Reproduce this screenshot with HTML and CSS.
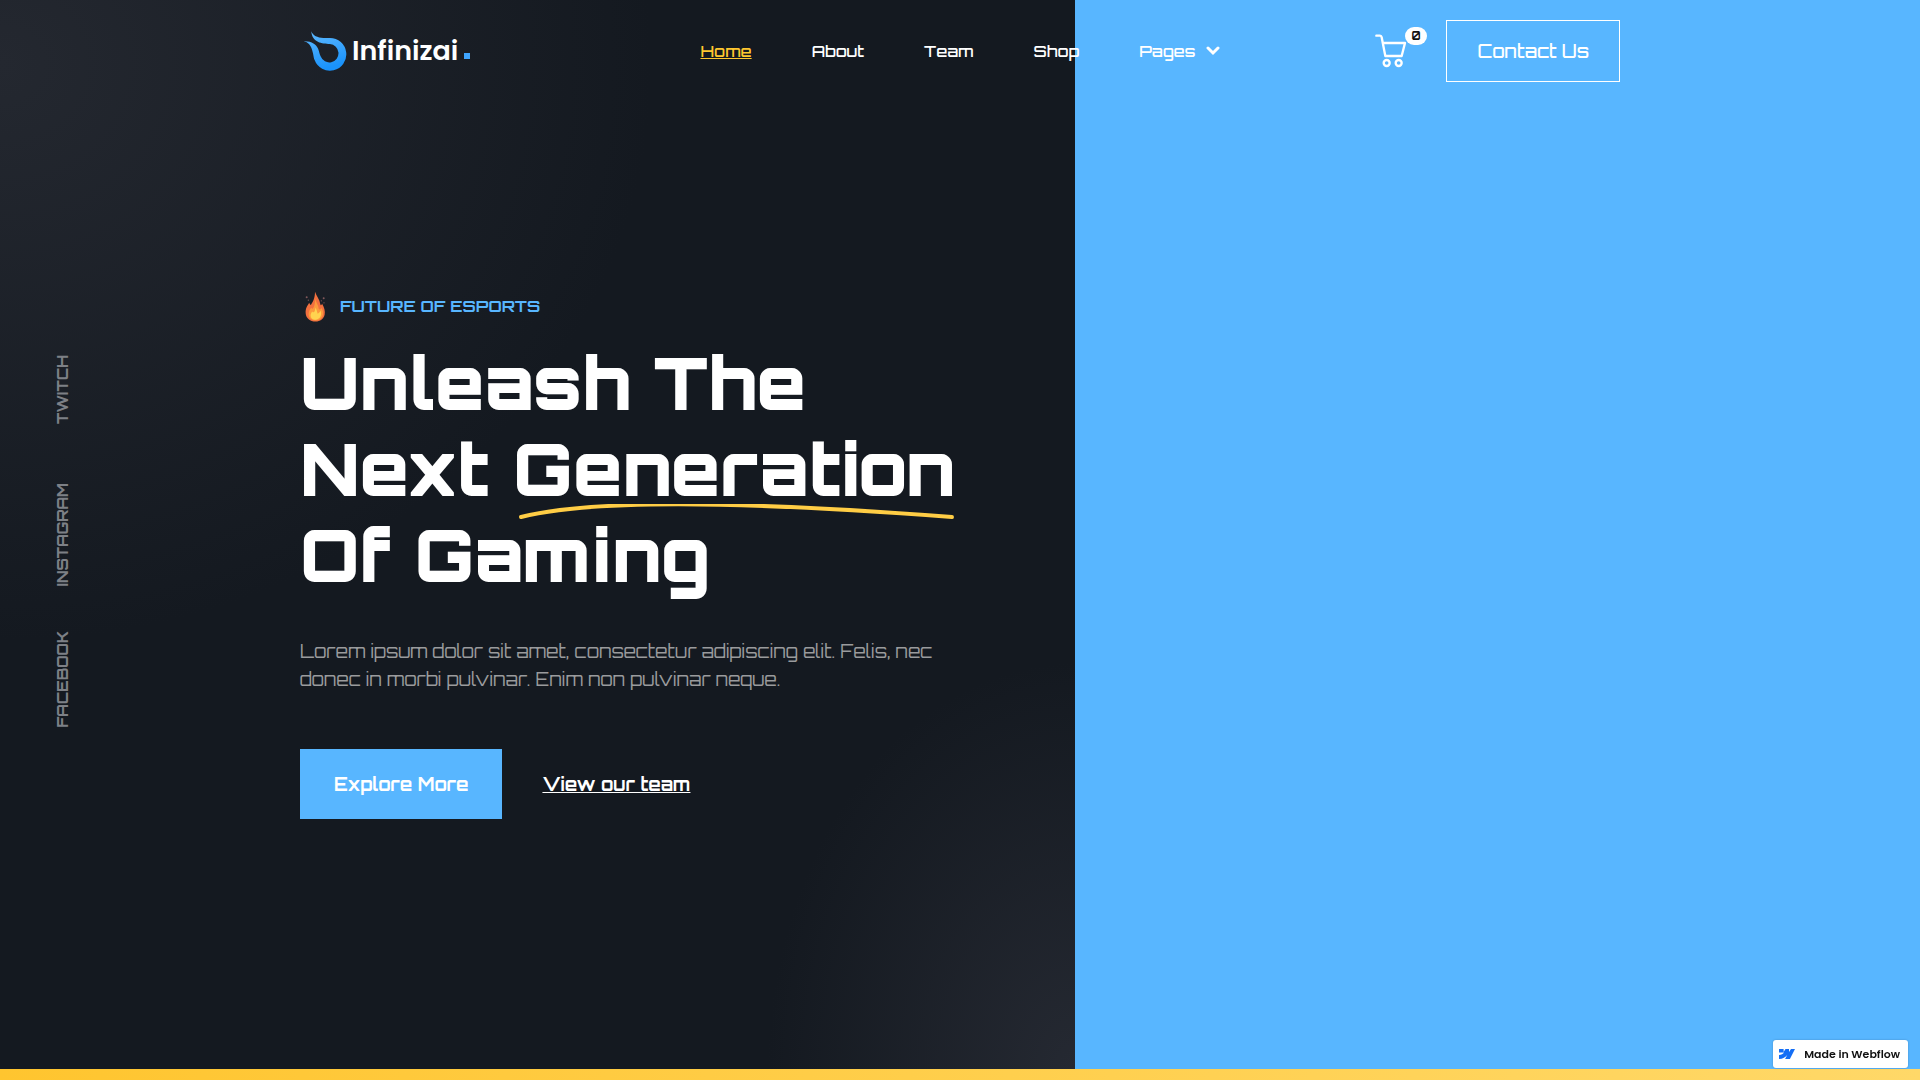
FILE: index.html
```html
<!DOCTYPE html>
<html lang="en">
<head>
<meta charset="utf-8">
<meta name="viewport" content="width=device-width, initial-scale=1">
<title>Infinizai</title>
<link rel="stylesheet" href="styles.css">
</head>
<body>
<div class="page">
  <header class="header">
    <a class="logo" href="#" aria-label="Infinizai">
      <svg class="logo-mark" viewBox="36 36 134 122" aria-hidden="true">
        <defs><linearGradient id="comet" x1="0" y1="0" x2="0.3" y2="1"><stop offset="0" stop-color="#62bbff"/><stop offset="1" stop-color="#1a93fb"/></linearGradient></defs>
        <path fill="url(#comet)" d="M61 37C66 50 80 57 98 57H118A50 50 0 1 1 71 124C66 108 66 72 38 67C62 66 76 76 82 90C86 100 86 106 90 114A28 28 0 1 0 118 76C94 75 64 72 61 37Z"/>
      </svg>
      <span class="logo-name">Infinizai</span><span class="logo-dot"></span>
    </a>
    <nav class="nav" aria-label="Main">
      <a class="nav-link nav-link-current" href="#">Home</a>
      <a class="nav-link" href="#">About</a>
      <a class="nav-link" href="#">Team</a>
      <a class="nav-link" href="#">Shop</a>
      <a class="nav-link nav-link-menu" href="#">Pages
        <svg class="chevron" viewBox="0 0 14 10" aria-hidden="true"><path d="M2 2l5 5 5-5" fill="none" stroke="currentColor" stroke-width="3" stroke-linecap="round"/></svg>
      </a>
    </nav>
    <div class="actions">
      <a class="cart" href="#" aria-label="Cart">
        <svg class="cart-icon" viewBox="45 72 96 102" aria-hidden="true">
          <g fill="none" stroke="#fff" stroke-width="7" stroke-linecap="round" stroke-linejoin="round"><path d="M49 77H60Q64 77 65 82L76 138H125L135 99H70"/><circle cx="80" cy="159" r="9"/><circle cx="116" cy="159" r="9"/></g>
        </svg>
        <span class="cart-count">0</span>
      </a>
      <a class="contact" href="#">Contact Us</a>
    </div>
  </header>

  <aside class="social">
    <a href="#">TWITCH</a>
    <a href="#">INSTAGRAM</a>
    <a href="#">FACEBOOK</a>
  </aside>

  <main class="hero">
    <div class="eyebrow">
      <svg class="flame" viewBox="46 35 63 92" aria-hidden="true">
        <path fill="#f2703f" d="M76 37C80 50 90 60 92 74C93 79 96 77 97 72C104 84 107 95 105 105C102 119 91 126 78 126C61 126 49 116 48 101C47 87 53 79 59 70C60 73 61 77 64 76C70 67 76 56 76 37Z"/>
        <path fill="#fd9a3c" d="M76 58C80 71 86 77 87 87C89 92 94 90 95 85C101 94 102 102 98 111C93 120 85 123 77 123C65 122 56 114 57 101C58 94 61 89 65 85C67 89 69 89 71 85C75 78 77 70 76 58Z"/>
        <path fill="#ffd34f" d="M78 84C81 91 82 97 84 103C89 100 91 97 93 94C97 106 92 119 79 121C68 121 62 115 63 106C64 101 66 98 68 96C70 100 73 99 75 95Z"/>
        <g fill="#80585a"><circle cx="51" cy="53" r="3"/><circle cx="56" cy="62" r="2"/><circle cx="102" cy="56" r="3"/><circle cx="95" cy="64" r="2"/><circle cx="103" cy="70" r="2"/></g>
      </svg>
      <span>FUTURE OF ESPORTS</span>
    </div>
    <h1 class="title">Unleash The<br>Next <span class="marked">Generation<svg class="swoosh" viewBox="0 0 440 16" preserveAspectRatio="none" aria-hidden="true"><path d="M8 13C90 -8 280 1 436 13" fill="none" stroke="#ffcd45" stroke-width="4" stroke-linecap="round"/></svg></span><br>Of Gaming</h1>
    <p class="lead">Lorem ipsum dolor sit amet, consectetur adipiscing elit. Felis, nec donec in morbi pulvinar. Enim non pulvinar neque.</p>
    <div class="cta">
      <a class="cta-primary" href="#">Explore More</a>
      <a class="cta-secondary" href="#">View our team</a>
    </div>
  </main>
</div>
<div class="stripe"></div>
<a class="webflow" href="#">
  <svg class="webflow-mark" viewBox="0 0 16 10" aria-hidden="true"><path fill="#146ef5" d="M16 0L10.9 10H6.1L8.2 5.9C6.500 8.200 3.900 9.700 0 10V5.900C2.500 5.800 4 4.600 5 3.400H0V0H4.600V2.900L6.500 0H10V2.900L12 0Z"/></svg>
  <span>Made in Webflow</span>
</a>
</body>
</html>
```
FILE: styles.css
```css
* {
  box-sizing: border-box;
}

body {
  margin: 0;
  background: #141920;
  color: #fff;
  font-family: Orbitron, "DejaVu Sans", sans-serif;
}

a {
  color: inherit;
  text-decoration: none;
}

.page {
  display: grid;
  grid-template-columns: minmax(0, 1fr) minmax(0, 1320px) minmax(0, 1fr);
  grid-template-rows: auto 1fr;
  min-height: calc(100vh - 11px);
  background:
    linear-gradient(to right, transparent 56%, #58b6ff 56%),
    radial-gradient(ellipse 16% 38% at 56% 100%, #252932, transparent),
    radial-gradient(ellipse 34% 54% at 0 6%, #242830, transparent),
    #141920;
}

.header {
  grid-column: 2;
  grid-row: 1;
  display: grid;
  grid-template-columns: 1fr auto 1fr;
  align-items: center;
  padding: 20px 0;
}

.logo {
  display: flex;
  align-items: center;
  justify-self: start;
  padding-left: 3px;
}

.logo-mark {
  width: 44px;
  height: 40px;
}

.logo-name {
  margin-left: 5px;
  font: 600 27px/40px Poppins, Inter, sans-serif;
}

.logo-dot {
  width: 6px;
  height: 6px;
  margin: 10px 0 0 6px;
  background: #3fa5ff;
}

.nav {
  display: flex;
  gap: 60px;
  font-size: 16px;
  font-weight: 500;
  line-height: 24px;
}

.nav-link-current {
  color: #ffc72f;
  text-decoration: underline;
}

.nav-link-menu {
  display: flex;
  align-items: center;
  gap: 10px;
}

.chevron {
  width: 14px;
  height: 10px;
}

.actions {
  display: flex;
  align-items: center;
  justify-content: flex-end;
  gap: 39px;
}

.cart {
  position: relative;
  display: flex;
}

.cart-icon {
  width: 32px;
  height: 34px;
}

.cart-count {
  position: absolute;
  top: -7px;
  left: 30px;
  padding: 0 6px;
  border-radius: 9px;
  background: #fff;
  color: #111;
  font-size: 11px;
  font-weight: 700;
  line-height: 18px;
}

.contact {
  padding: 18px 30px;
  border: 1px solid #fff;
  font-size: 18px;
  font-weight: 500;
  line-height: 24px;
}

.social {
  grid-column: 1;
  grid-row: 1 / 3;
  align-self: center;
  display: grid;
  grid-auto-rows: 145px;
  align-items: center;
  justify-items: start;
  padding-left: 51px;
  color: #7d8086;
  font-size: 15px;
  font-weight: 700;
  line-height: 24px;
}

.social a {
  writing-mode: vertical-rl;
  transform: rotate(180deg);
}

.hero {
  grid-column: 2;
  grid-row: 2;
  padding: 187px 0 120px;
}

.eyebrow {
  display: flex;
  align-items: center;
  gap: 14px;
  padding-left: 5px;
  color: #58b6ff;
  font-size: 16px;
  font-weight: 700;
  line-height: 34px;
}

.flame {
  width: 21px;
  height: 31px;
}

.title {
  margin: 16px 0 40px;
  font-size: 72px;
  font-weight: 900;
  line-height: 86px;
}

.marked {
  position: relative;
}

.swoosh {
  position: absolute;
  left: 0;
  bottom: -7px;
  width: 100%;
  height: 16px;
}

.lead {
  max-width: 650px;
  margin: 0;
  color: #9a9b9d;
  font-size: 18px;
  font-weight: 400;
  line-height: 28px;
}

.cta {
  display: flex;
  align-items: center;
  gap: 40px;
  margin-top: 56px;
  font-size: 18px;
  font-weight: 700;
  line-height: 24px;
}

.cta-primary {
  padding: 23px 34px;
  background: #58b6ff;
}

.cta-secondary {
  text-decoration: underline;
}

.stripe {
  height: 11px;
  background: linear-gradient(to right, #ffc52f, #ffd868);
}

.webflow {
  position: fixed;
  right: 12px;
  bottom: 12px;
  display: flex;
  align-items: center;
  gap: 9px;
  padding: 4px 8px 4px 6px;
  border-radius: 3px;
  background: #fff;
  box-shadow: 0 0 2px rgba(0, 0, 0, 0.25);
  color: #111;
  font: 600 11px/20px Poppins, Inter, sans-serif;
}

.webflow-mark {
  width: 16px;
  height: 10px;
}
```
